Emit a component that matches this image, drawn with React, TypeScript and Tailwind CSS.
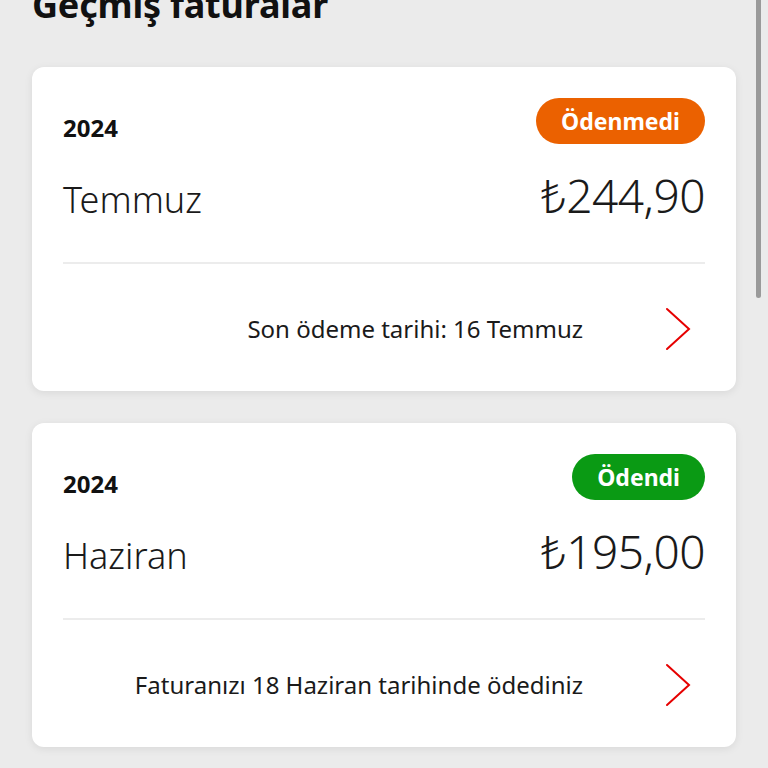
import React from 'react';

interface Invoice {
  year: string;
  month: string;
  amount: string;
  status: 'paid' | 'unpaid';
  note: string;
}

const invoices: Invoice[] = [
  { year: '2024', month: 'Temmuz', amount: '244,90', status: 'unpaid', note: 'Son ödeme tarihi: 16 Temmuz' },
  { year: '2024', month: 'Haziran', amount: '195,00', status: 'paid', note: 'Faturanızı 18 Haziran tarihinde ödediniz' },
];

function Chevron() {
  return (
    <svg width="26" height="44" viewBox="0 0 26 44" fill="none">
      <path d="M2 2 L24 22 L2 42" stroke="#e60000" strokeWidth="2" strokeLinecap="round" strokeLinejoin="miter" />
    </svg>
  );
}

function InvoiceCard({ invoice }: { invoice: Invoice }) {
  const paid = invoice.status === 'paid';
  return (
    <div className="bg-white rounded-xl shadow-[0_2px_8px_rgba(0,0,0,0.08)] px-[31px] pt-[31px]">
      <div className="flex items-start justify-between">
        <span className="mt-[18px] text-[24px] font-bold text-[#111] leading-none">{invoice.year}</span>
        <span
          className={
            paid
              ? 'h-[46px] px-[25px] rounded-full bg-[#0a9a14] text-white text-[23px] font-bold flex items-center leading-none'
              : 'h-[46px] px-[25px] rounded-full bg-[#eb6100] text-white text-[23px] font-bold flex items-center leading-none'
          }
        >
          {paid ? 'Ödendi' : 'Ödenmedi'}
        </span>
      </div>
      <div className="flex items-baseline justify-between mt-[28px]">
        <span className="text-[36px] font-light text-[#1a1a1a] leading-none">{invoice.month}</span>
        <span className="text-[46px] font-light text-[#1a1a1a] leading-none tracking-[-0.5px]">₺{invoice.amount}</span>
      </div>
      <div className="h-[2px] bg-[#ececec] mt-[44px]" />
      <div className="flex items-center justify-end h-[127px] pt-[3px]">
        <span className="text-[24px] text-[#1a1a1a]">{invoice.note}</span>
        <div className="ml-[82px] mr-[14px] flex items-center">
          <Chevron />
        </div>
      </div>
    </div>
  );
}

export default function App() {
  return (
    <div className="relative w-[768px] h-[768px] overflow-hidden bg-[#ebebeb]" style={{ fontFamily: '"Noto Sans", "Open Sans", sans-serif' }}>
      <div className="px-8">
        <h2 className="-mt-[22px] h-[89px] text-[36px] font-bold text-[#111] tracking-[-0.2px] leading-[54px]">
          Geçmiş faturalar
        </h2>
        <div className="flex flex-col gap-8">
          {invoices.map((inv) => (
            <InvoiceCard key={inv.month} invoice={inv} />
          ))}
        </div>
      </div>
      <div className="absolute right-[7px] top-0 w-[5px] h-[298px] rounded-b-full bg-[#9a9a9a]" />
    </div>
  );
}
